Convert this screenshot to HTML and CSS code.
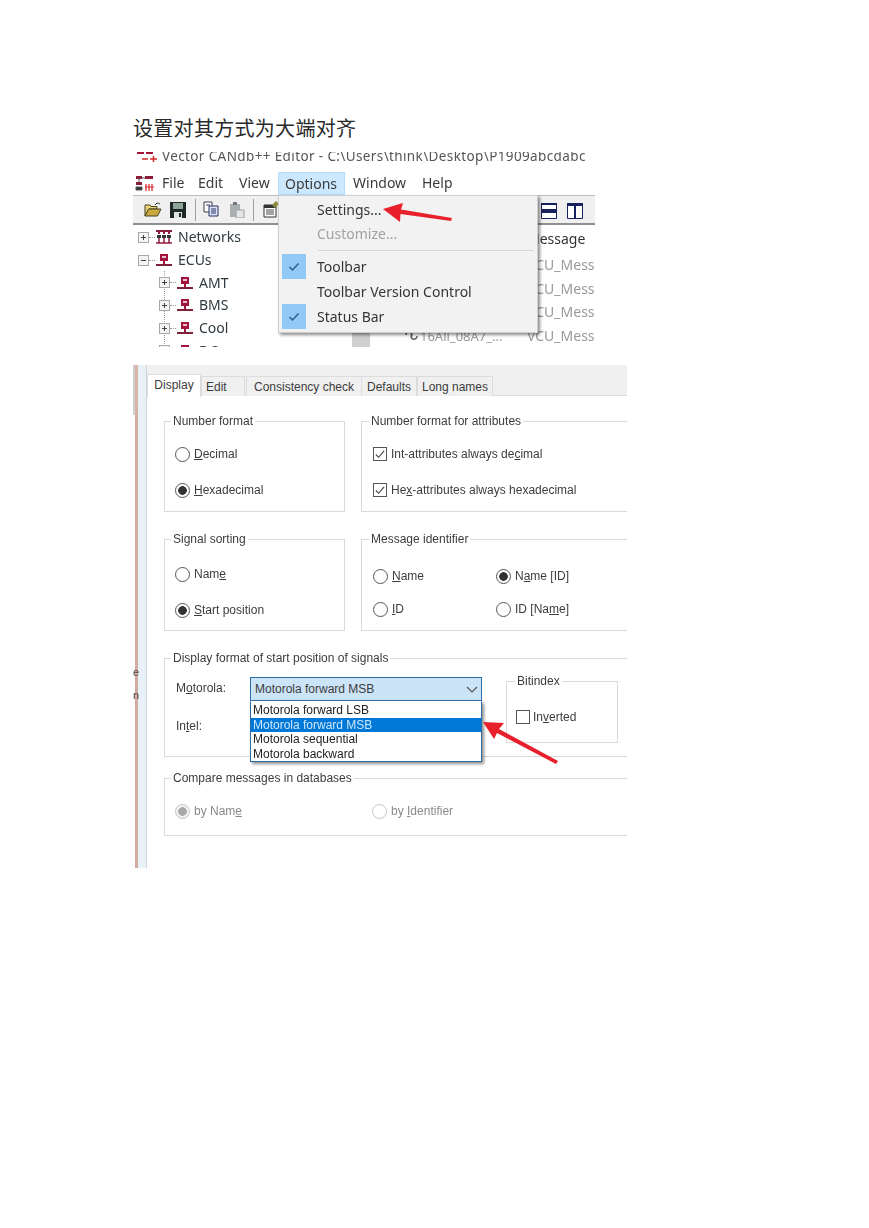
FILE: index.html
```html
<!DOCTYPE html>
<html lang="zh">
<head>
<meta charset="utf-8">
<title>设置对其方式为大端对齐</title>
<link rel="stylesheet" href="styles.css">
</head>
<body>
<svg class="defs" width="0" height="0" aria-hidden="true">
  <symbol id="ecu" viewBox="0 0 18 14">
    <rect x="5" y="1" width="8" height="7" fill="#a3143c"/>
    <rect x="7" y="3" width="4" height="2" fill="#e9c6cf"/>
    <rect x="8" y="8" width="2" height="3" fill="#a3143c"/>
    <rect x="1" y="11" width="16" height="2" fill="#7d2238"/>
  </symbol>
  <symbol id="plus" viewBox="0 0 11 11">
    <rect x=".5" y=".5" width="10" height="10" fill="#f4f4f4" stroke="#a8a8a8"/>
    <path d="M3 5.5h5M5.5 3v5" stroke="#444"/>
  </symbol>
  <symbol id="minus" viewBox="0 0 11 11">
    <rect x=".5" y=".5" width="10" height="10" fill="#f4f4f4" stroke="#a8a8a8"/>
    <path d="M3 5.5h5" stroke="#444"/>
  </symbol>
</svg>
<main class="page">
  <h1 class="title">设置对其方式为大端对齐</h1>

  <section class="win">
    <div class="titlebar">
      <svg class="title-icon" width="22" height="12" viewBox="0 0 22 12"><path d="M1 0h7v3H1zM10 0h7v3h-7z" fill="#a3143c"/><path d="M14 8h7M17.500 5v6M6 8h6" stroke="#d42a2a" stroke-width="1.500"/></svg>
      <span class="title-text">Vector CANdb++ Editor - C:\Users\think\Desktop\P1909abcdabc</span>
    </div>
    <nav class="menubar">
      <svg class="app-icon" width="20" height="17" viewBox="0 0 20 17"><path d="M1 1h6v3H1zM10 1h8v3h-8zM1 7h6v3H1z" fill="#8e1d3a"/><path d="M7 3h3M4 4v3M1 12h6v3H1z" stroke="#555" fill="#333"/><path d="M10 12h9M14 9v7M17 9v7M11 9v7" stroke="#d8232a" stroke-width="1.200"/></svg>
      <span class="m m-file">File</span>
      <span class="m m-edit">Edit</span>
      <span class="m m-view">View</span>
      <span class="m m-options">Options</span>
      <span class="m m-window">Window</span>
      <span class="m m-help">Help</span>
    </nav>
    <div class="toolbar">
      <svg class="t-open" width="18" height="15" viewBox="0 0 18 15"><path d="M1 3h5l1 1.500h6V7H5L1 14z" fill="#e8d77a" stroke="#4a4324"/><path d="M1 14l3.500-7H17l-3.500 7z" fill="#c9a93e" stroke="#4a4324"/><path d="M11 3c1-2 3-2.500 5-1" fill="none" stroke="#333"/></svg>
      <svg class="t-save" width="16" height="16" viewBox="0 0 16 16"><path d="M0 0h16v16H0z" fill="#1f2a24"/><path d="M3 1h10v6H3z" fill="#8ea59a"/><path d="M4 10h8v6H4z" fill="#dfe5e2"/><path d="M9 11h2v4H9z" fill="#1f2a24"/></svg>
      <i class="t-sep"></i>
      <svg class="t-copy" width="16" height="16" viewBox="0 0 16 16"><path d="M1 1h8v10H1z" fill="#fff" stroke="#3c3c46"/><path d="M6 5h9v10H6z" fill="#dfe4f2" stroke="#27306c"/><path d="M8 8h5M8 10h5M8 12h5M3 4h4" stroke="#27306c"/></svg>
      <svg class="t-paste" width="16" height="16" viewBox="0 0 16 16"><path d="M1 2h10v13H1z" fill="#aab0b2"/><path d="M4 0h4v3H4z" fill="#777"/><path d="M7 8h8v8H7z" fill="#e3e5e6" stroke="#9a9fa1"/></svg>
      <i class="t-sep t-sep2"></i>
      <svg class="t-prop" width="16" height="17" viewBox="0 0 16 17"><path d="M1 4h12v12H1z" fill="#fff" stroke="#333"/><path d="M1 4h12v3H1z" fill="#333"/><path d="M3 9h8M3 11h8M3 13h8" stroke="#444"/><path d="M9 4l4-4 3 3-4 4z" fill="#8a8a3a"/></svg>
      <svg class="t-split" width="16" height="16" viewBox="0 0 16 16"><path d="M.5.500h15v15H.5z" fill="#fff" stroke="#16215f"/><path d="M0 6h16v4H0z" fill="#16215f"/><path d="M0 0h16v2H0z" fill="#16215f"/></svg>
      <svg class="t-split2" width="16" height="16" viewBox="0 0 16 16"><path d="M.5.500h15v15H.5z" fill="#fff" stroke="#16215f"/><path d="M7 0h2v16H7zM0 0h16v3H0z" fill="#16215f"/></svg>
    </div>
    <div class="panes">
      <ul class="tree">
        <li class="node"><svg class="box" width="11" height="11"><use href="#plus"/></svg><i class="dots"></i><svg class="net" width="18" height="14" viewBox="0 0 18 14"><path d="M1 1h16M4 1v3M9 1v3M14 1v3" stroke="#8e1d3a" stroke-width="2"/><path d="M2 5h4v3H2zM7 5h4v3H7zM12 5h4v3h-4z" fill="#333"/><path d="M4 8v5M9 8v5M14 8v5M1 13h16" stroke="#8e1d3a" stroke-width="1.500"/></svg>Networks</li>
        <li class="node"><svg class="box" width="11" height="11"><use href="#minus"/></svg><i class="dots"></i><svg class="net" width="18" height="14"><use href="#ecu"/></svg>ECUs</li>
        <li>
          <ul class="children">
            <li class="node"><svg class="box" width="11" height="11"><use href="#plus"/></svg><i class="dots"></i><svg class="net" width="18" height="14"><use href="#ecu"/></svg>AMT</li>
            <li class="node"><svg class="box" width="11" height="11"><use href="#plus"/></svg><i class="dots"></i><svg class="net" width="18" height="14"><use href="#ecu"/></svg>BMS</li>
            <li class="node"><svg class="box" width="11" height="11"><use href="#plus"/></svg><i class="dots"></i><svg class="net" width="18" height="14"><use href="#ecu"/></svg>Cool</li>
            <li class="node"><svg class="box" width="11" height="11"><use href="#plus"/></svg><i class="dots"></i><svg class="net" width="18" height="14"><use href="#ecu"/></svg>DC</li>
          </ul>
        </li>
      </ul>
      <div class="scrollstub"></div>
      <div class="list">
        <div class="row head"><span></span><span>Message</span></div>
        <div class="row"><span></span><span>VCU_Message</span></div>
        <div class="row"><span></span><span>VCU_Message</span></div>
        <div class="row"><span></span><span>VCU_Message</span></div>
        <div class="row"><span class="sig"><svg width="13" height="11" viewBox="0 0 13 11"><path d="M1 5a3 3 0 1 1 5 2M12 6a3 3 0 1 1-5-2" fill="none" stroke="#666" stroke-width="1.500"/></svg>16All_08A7_...</span><span>VCU_Message</span></div>
      </div>
    </div>

    <div class="menu">
      <div class="mi"><span class="gut"></span>Settings...</div>
      <div class="mi off"><span class="gut"></span>Customize...</div>
      <hr class="msep">
      <div class="mi tall"><span class="gut on"><svg width="12" height="10" viewBox="0 0 12 10"><path d="M1.500 5l3 3 6-6.500" fill="none" stroke="#2b5f8c" stroke-width="1.500"/></svg></span>Toolbar</div>
      <div class="mi tall"><span class="gut"></span>Toolbar Version Control</div>
      <div class="mi tall"><span class="gut on"><svg width="12" height="10" viewBox="0 0 12 10"><path d="M1.500 5l3 3 6-6.500" fill="none" stroke="#2b5f8c" stroke-width="1.500"/></svg></span>Status Bar</div>
    </div>
    <svg class="arrow arrow-a" width="72" height="22" viewBox="0 0 72 22"><path d="M2 7L22 1L20 7.500L71 16L70 19L19.500 12L19 20z" fill="#e8202c"/></svg>
  </section>

  <section class="dlg">
    <div class="edge"><span class="edge-top"></span><span class="edge-line"></span></div>
    <div class="gutter"></div>
    <div class="main">
      <div class="tabs">
        <span class="tab sel">Display</span>
        <span class="tab t2">Edit</span>
        <span class="tab t3">Consistency check</span>
        <span class="tab t4">Defaults</span>
        <span class="tab t5">Long names</span>
      </div>
      <div class="content">
        <div class="pair">
          <fieldset class="grp">
            <legend>Number format</legend>
            <div class="opts">
              <label class="opt"><i class="radio"></i><span><u>D</u>ecimal</span></label>
              <label class="opt"><i class="radio sel"></i><span><u>H</u>exadecimal</span></label>
            </div>
          </fieldset>
          <fieldset class="grp open">
            <legend>Number format for attributes</legend>
            <div class="opts">
              <label class="opt"><i class="check"><svg width="13" height="13" viewBox="0 0 13 13"><path d="M2 6.500l3 3 6-7" fill="none" stroke="#444" stroke-width="1.200"/></svg></i><span>Int-attributes always de<u>c</u>imal</span></label>
              <label class="opt"><i class="check"><svg width="13" height="13" viewBox="0 0 13 13"><path d="M2 6.500l3 3 6-7" fill="none" stroke="#444" stroke-width="1.200"/></svg></i><span>He<u>x</u>-attributes always hexadecimal</span></label>
            </div>
          </fieldset>
        </div>
        <div class="pair second">
          <fieldset class="grp">
            <legend>Signal sorting</legend>
            <div class="opts">
              <label class="opt"><i class="radio"></i><span>Nam<u>e</u></span></label>
              <label class="opt"><i class="radio sel"></i><span><u>S</u>tart position</span></label>
            </div>
          </fieldset>
          <fieldset class="grp open">
            <legend>Message identifier</legend>
            <div class="opts two">
              <label class="opt"><i class="radio"></i><span><u>N</u>ame</span></label>
              <label class="opt"><i class="radio sel"></i><span>N<u>a</u>me [ID]</span></label>
              <label class="opt"><i class="radio"></i><span><u>I</u>D</span></label>
              <label class="opt"><i class="radio"></i><span>ID [Na<u>m</u>e]</span></label>
            </div>
          </fieldset>
        </div>
        <fieldset class="grp open wide">
          <legend>Display format of start position of signals</legend>
          <div class="fmt">
            <div class="labels">
              <span>M<u>o</u>torola:</span>
              <span>In<u>t</u>el:</span>
            </div>
            <div class="combo-wrap">
              <div class="combo">Motorola forward MSB
                <svg width="12" height="7" viewBox="0 0 12 7"><path d="M1 1l5 5 5-5" fill="none" stroke="#555" stroke-width="1.200"/></svg>
              </div>
              <ul class="droplist">
                <li>Motorola forward LSB</li>
                <li class="hl">Motorola forward MSB</li>
                <li>Motorola sequential</li>
                <li>Motorola backward</li>
              </ul>
            </div>
            <fieldset class="grp bit">
              <legend>Bitindex</legend>
              <label class="opt"><i class="check plain"></i><span>In<u>v</u>erted</span></label>
            </fieldset>
          </div>
        </fieldset>
        <fieldset class="grp open cmp">
          <legend>Compare messages in databases</legend>
          <div class="opts two wide-col">
            <label class="opt dis"><i class="radio sel"></i><span>by Nam<u>e</u></span></label>
            <label class="opt dis"><i class="radio"></i><span>by <u>I</u>dentifier</span></label>
          </div>
        </fieldset>
      </div>
    </div>
    <span class="stray s1">e</span>
    <span class="stray s2">n</span>
    <svg class="arrow arrow-b" width="78" height="44" viewBox="0 0 78 44"><path d="M1 1L22 2L17 8L76 40L74 43L15 12L12 18z" fill="#e8202c"/></svg>
  </section>
</main>
</body>
</html>
```
FILE: styles.css
```css
* { box-sizing: border-box; }
html, body { margin: 0; background: #fff; overflow: hidden; }
.defs { position: absolute; }
.page {
  height: 1228px;
  padding: 116px 0 0 133px;
}
.title {
  margin: 0 0 14px;
  height: 22px;
  font: 400 20px/26px "Liberation Serif", "Noto Sans CJK SC", serif;
  letter-spacing: .3px;
  color: #2a2a2a;
}

/* first screenshot */
.win {
  position: relative;
  width: 462px;
  height: 195px;
  overflow: hidden;
  font: 14px/20px "Noto Sans", sans-serif;
  color: #3a3a3a;
  filter: blur(.35px);
}
.titlebar {
  height: 20px;
  display: flex;
  gap: 4px;
  overflow: hidden;
  color: #555;
  align-items: flex-start;
}
.title-icon { margin: -1px 0 0 3px; flex: none; }
.title-text { margin-top: -6px; white-space: nowrap; font-size: 13.500px; letter-spacing: .38px; }
.menubar { position: relative; height: 23px; }
.app-icon { position: absolute; left: 2px; top: 3px; }
.m { position: absolute; top: 1px; }
.m-file { left: 29px; }
.m-edit { left: 65px; }
.m-view { left: 106px; }
.m-options {
  left: 145px;
  top: 0;
  width: 67px;
  height: 23px;
  padding: 1px 0 0 6px;
  background: #cce8ff;
  border: 1px solid #b5dcf8;
}
.m-window { left: 220px; }
.m-help { left: 289px; }
.toolbar {
  position: relative;
  height: 30px;
  background: #f0f0f0;
  border-top: 1px solid #bdbdbd;
  border-bottom: 2px solid #8f8f8f;
}
.toolbar svg, .t-sep { position: absolute; }
.t-open { left: 11px; top: 6px; }
.t-save { left: 37px; top: 6px; }
.t-sep { left: 62px; top: 3px; width: 1px; height: 22px; background: #a0a0a0; }
.t-sep2 { left: 120px; }
.t-copy { left: 70px; top: 5px; }
.t-paste { left: 96px; top: 6px; }
.t-prop { left: 130px; top: 5px; }
.t-split { left: 408px; top: 7px; }
.t-split2 { left: 434px; top: 7px; }
.panes { display: flex; height: 122px; overflow: hidden; }
.tree {
  list-style: none;
  margin: 0;
  padding: 1px 0 0 5px;
  width: 219px;
  flex: none;
  color: #2f3a40;
}
.node { display: flex; align-items: center; height: 22.700px; }
.box { flex: none; }
.dots { width: 6px; border-top: 1px dotted #999; flex: none; }
.net { margin-right: 5px; flex: none; }
.children {
  list-style: none;
  margin: 0 0 0 26px;
  padding: 0;
  border-left: 1px dotted #999;
}
.children .node { margin-left: -6px; }
.scrollstub {
  width: 18px;
  flex: none;
  align-self: flex-end;
  height: 14px;
  background: #cfcfcf;
}
.list {
  flex: 1;
  margin-left: 6px;
  border-left: 2px solid transparent;
  color: #9a9a9a;
  white-space: nowrap;
  overflow: hidden;
}
.row {
  display: grid;
  grid-template-columns: 149px 1fr;
  height: 23.700px;
  align-items: center;
}
.row.head { color: #333; height: 28px; }
.sig { display: flex; align-items: center; gap: 2px; padding-left: 27px; font-size: 13px; }

.menu {
  position: absolute;
  left: 145px;
  top: 43px;
  width: 260px;
  height: 138px;
  padding: 2px 0 0 3px;
  background: #f2f2f2;
  border: 1px solid #cfcfcf;
  box-shadow: 2px 2px 3px rgba(0,0,0,.45);
  color: #353535;
}
.mi { display: flex; align-items: center; height: 24px; }
.mi.tall { height: 25px; }
.off { color: #a2a2a2; }
.gut {
  width: 24px;
  height: 25px;
  margin-right: 11px;
  flex: none;
  display: flex;
  align-items: center;
  justify-content: center;
}
.gut.on { background: #90c8f6; }
.msep { margin: 4px 3px 3px 36px; border: 0; border-top: 1px solid #d6d6d6; height: 0; }
.arrow { position: absolute; }
.arrow-a { left: 248px; top: 50px; }

/* second screenshot */
.dlg {
  position: relative;
  display: flex;
  width: 494px;
  height: 503px;
  margin-top: 18px;
  overflow: hidden;
  font: 12px/14px "Liberation Sans", sans-serif;
  color: #3c3c3c;
  filter: blur(.3px);
}
.edge { width: 5px; flex: none; display: flex; flex-direction: column; }
.edge-top { height: 50px; background: #cfcfcf; border-right: 3px solid #d9b3a8; }
.edge-line { flex: 1; border-left: 2px solid #fff; background: #d3aba0; }
.gutter { width: 9px; flex: none; background: #e9f1f8; border-right: 1px solid #cfd5da; }
.main { flex: 1; min-width: 0; }
.tabs {
  position: relative;
  height: 31px;
  background: #f0f0f0;
  border-bottom: 1px solid #dcdcdc;
}
.tab {
  position: absolute;
  top: 11px;
  height: 20px;
  padding-top: 3px;
  text-align: center;
  background: #f0f0f0;
  border: 1px solid #dcdcdc;
  border-bottom: 0;
}
.tab.sel { left: 0; top: 9px; width: 54px; height: 23px; background: #fff; }
.tab.t2 { left: 54px; width: 44px; padding-left: 4px; text-align: left; }
.t3 { left: 99px; width: 116px; }
.t4 { left: 214px; width: 56px; }
.t5 { left: 270px; width: 76px; }
.content { display: flex; flex-direction: column; padding: 18px 0 0 17px; }
.pair { display: grid; grid-template-columns: 181px 1fr; column-gap: 16px; margin-bottom: 20px; }
.grp {
  margin: 0;
  min-width: 0;
  padding: 0 0 0 10px;
  border: 1px solid #dadada;
}
.grp legend { margin-left: -4px; padding: 0 2px; }
.grp.open { border-right: 0; padding-left: 11px; }
.opts { display: flex; flex-direction: column; gap: 16px; padding: 16px 0 11px; }
.second .opts { padding: 18px 0 10px; }
.opts.two {
  display: grid;
  grid-template-columns: 123px 1fr;
  gap: 13px 0;
}
.second .opts.two { padding: 20px 0 9px; }
.opt { display: flex; align-items: center; gap: 4px; height: 20px; }
.radio {
  width: 15px;
  height: 15px;
  flex: none;
  border: 1px solid #555;
  border-radius: 50%;
  background: #fff;
}
.radio.sel { background: radial-gradient(circle, #333 0 4px, #fff 4.600px); }
.check {
  width: 14px;
  height: 14px;
  flex: none;
  border: 1px solid #555;
  display: flex;
  align-items: center;
  justify-content: center;
}
.grp.wide { height: 106px; margin-bottom: 14px; padding-left: 10px; }
.fmt { display: flex; align-items: flex-start; padding-top: 9px; }
.labels {
  width: 75px;
  flex: none;
  display: flex;
  flex-direction: column;
  gap: 24px;
  padding: 7px 0 0 1px;
}
.combo-wrap { position: relative; width: 232px; flex: none; margin-top: 3px; }
.combo {
  height: 24px;
  padding: 4px 0 0 4px;
  display: flex;
  justify-content: space-between;
  background: #cce4f7;
  border: 1px solid #2a6ea8;
  font-size: 12px;
}
.combo svg { margin: 4px 3px 0 0; }
.droplist {
  position: absolute;
  left: 0;
  top: 24px;
  width: 232px;
  margin: 0;
  padding: 1px 0 0;
  list-style: none;
  background: #fff;
  border: 1px solid #2a6ea8;
  border-top-color: #fff;
  box-shadow: 2px 2px 3px rgba(0,0,0,.45);
  color: #222;
}
.droplist li { height: 14.600px; line-height: 14.600px; padding-left: 2px; }
.droplist .hl { background: #0078d7; color: #cfe6f8; }
.grp.bit { width: 112px; height: 69px; margin: 0 0 0 24px; border-right: 1px solid #dadada; padding: 19px 0 0 9px; }
.bit legend { margin-left: -1px; }
.bit .opt { gap: 3px; }
.plain { background: #fff; }
.grp.cmp { height: 65px; padding-left: 10px; }
.opts.wide-col { grid-template-columns: 197px 1fr; padding: 16px 0 0; }
.dis { color: #8a8a8a; }
.dis .radio { border-color: #c4c4c4; }
.dis .radio.sel { background: radial-gradient(circle, #a8a8a8 0 4px, #f2f2f2 4.600px); }
.stray { position: absolute; left: 0; font-size: 11px; color: #444; }
.s1 { top: 300px; }
.s2 { top: 323px; }
.arrow-b { left: 349px; top: 356px; }
```
